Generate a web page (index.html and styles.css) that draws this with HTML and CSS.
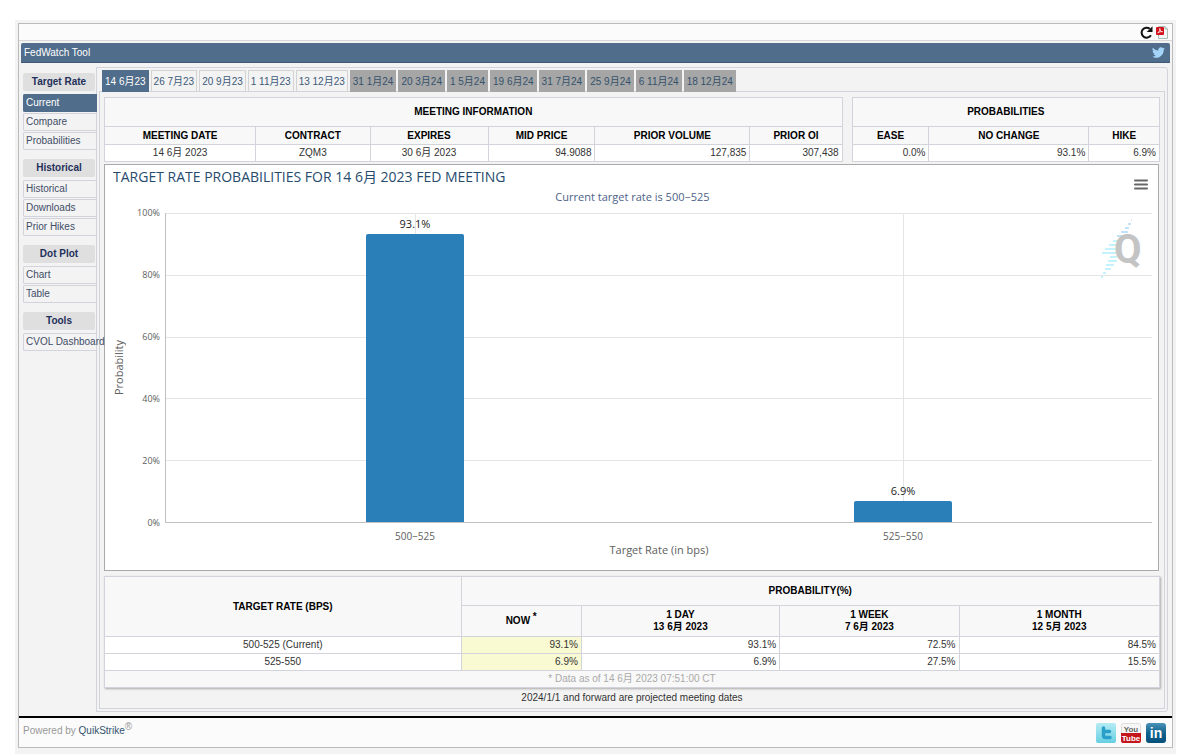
FILE: index.html
```html
<!DOCTYPE html>
<html lang="en">
<head>
  <meta charset="UTF-8" />
  <meta name="viewport" content="width=device-width, initial-scale=1.0" />
  <title>FedWatch Tool</title>
  <link rel="stylesheet" href="styles.css">
</head>
<body>
  <div class="frame">
    <div class="toolbar">
      <button type="button" aria-label="Refresh">
        <svg width="13" height="13" viewBox="0 0 13 13"><path d="M10.9 9.300A5 5 0 1 1 9.800 2.800" fill="none" stroke="#111" stroke-width="2"/><path d="M12.500 .2v5.800H6.700z" fill="#111"/></svg>
      </button>
      <button type="button" aria-label="Export to PDF">
        <svg width="12" height="13" viewBox="0 0 12 13"><path d="M2.5 .5h6.5l2.500 2.500v9.500h-9z" fill="#f4f7f5" stroke="#a9bdb5"/><path d="M9 .5v2.500h2.500" fill="none" stroke="#a9bdb5"/><rect x="0" y="1" width="8" height="8" rx="1" fill="#d4121b"/><path d="M1.800 7C3.500 5.500 4 3.500 3.800 2.500C4 4.500 5 5.800 6.500 5.700C4.500 5.400 3 6 1.800 7z" fill="none" stroke="#fff" stroke-width=".8"/></svg>
      </button>
    </div>

    <header class="titlebar">
      <h1>FedWatch Tool</h1>
      <a href="#" aria-label="Twitter">
        <svg width="13" height="13" viewBox="0 0 24 24"><path fill="#a5d4fa" d="M23.950 4.570a10 10 0 0 1-2.820.770 4.960 4.960 0 0 0 2.160-2.720c-.950.550-2 .950-3.130 1.180a4.920 4.920 0 0 0-8.380 4.480C7.690 8.090 4.070 6.130 1.640 3.160a4.930 4.930 0 0 0 1.520 6.570 4.900 4.900 0 0 1-2.230-.610v.060a4.920 4.920 0 0 0 3.950 4.830 5 5 0 0 1-2.210.080 4.940 4.940 0 0 0 4.600 3.420A9.870 9.870 0 0 1 0 19.540a13.990 13.990 0 0 0 7.550 2.210c9.050 0 14-7.500 14-13.980 0-.210 0-.420-.020-.630a9.940 9.940 0 0 0 2.460-2.550z"/></svg>
      </a>
    </header>

    <div class="main">
      <nav class="sidebar">
        <h2>Target Rate</h2>
        <a class="active" href="#">Current</a>
        <a href="#">Compare</a>
        <a href="#">Probabilities</a>
        <h2>Historical</h2>
        <a href="#">Historical</a>
        <a href="#">Downloads</a>
        <a href="#">Prior Hikes</a>
        <h2>Dot Plot</h2>
        <a href="#">Chart</a>
        <a href="#">Table</a>
        <h2>Tools</h2>
        <a href="#">CVOL Dashboard</a>
      </nav>

      <div class="panel">
        <div class="tabs">
          <a class="active" href="#">14 6月23</a>
          <a href="#">26 7月23</a>
          <a href="#">20 9月23</a>
          <a href="#">1 11月23</a>
          <a href="#">13 12月23</a>
          <a class="projected" href="#">31 1月24</a>
          <a class="projected" href="#">20 3月24</a>
          <a class="projected" href="#">1 5月24</a>
          <a class="projected" href="#">19 6月24</a>
          <a class="projected" href="#">31 7月24</a>
          <a class="projected" href="#">25 9月24</a>
          <a class="projected" href="#">6 11月24</a>
          <a class="projected" href="#">18 12月24</a>
        </div>

        <div class="content">
          <div class="summary">
            <table class="meeting">
              <colgroup><col class="c-date"><col class="c-contract"><col class="c-expires"><col class="c-price"><col class="c-volume"><col></colgroup>
              <thead>
                <tr class="caption"><th colspan="6">MEETING INFORMATION</th></tr>
                <tr><th>MEETING DATE</th><th>CONTRACT</th><th>EXPIRES</th><th>MID PRICE</th><th>PRIOR VOLUME</th><th>PRIOR OI</th></tr>
              </thead>
              <tbody>
                <tr><td class="center">14 6月 2023</td><td class="center">ZQM3</td><td class="center">30 6月 2023</td><td>94.9088</td><td>127,835</td><td>307,438</td></tr>
              </tbody>
            </table>
            <table class="probs">
              <colgroup><col class="c-ease"><col class="c-same"><col></colgroup>
              <thead>
                <tr class="caption"><th colspan="3">PROBABILITIES</th></tr>
                <tr><th>EASE</th><th>NO CHANGE</th><th>HIKE</th></tr>
              </thead>
              <tbody>
                <tr><td>0.0%</td><td>93.1%</td><td>6.9%</td></tr>
              </tbody>
            </table>
          </div>

          <section class="chart">
            <h2>TARGET RATE PROBABILITIES FOR 14 6月 2023 FED MEETING</h2>
            <p class="subtitle">Current target rate is 500−525</p>
            <button class="menu" type="button" aria-label="Chart menu">
              <svg width="14" height="11" viewBox="0 0 14 11"><path d="M1 1.500h12M1 5.500h12M1 9.500h12" stroke="#666" stroke-width="2" stroke-linecap="round"/></svg>
            </button>
            <div class="chart-body">
              <div class="y-title"><span>Probability</span></div>
              <div class="y-labels">
                <span>100%</span><span>80%</span><span>60%</span><span>40%</span><span>20%</span><span>0%</span>
              </div>
              <div class="plot">
                <div class="gridlines"><i></i><i></i><i></i><i></i><i></i></div>
                <div class="bars">
                  <div class="slot"><span>93.1%</span><div class="bar" style="height: 93.1%"></div></div>
                  <div class="slot"><span>6.9%</span><div class="bar" style="height: 6.9%"></div></div>
                </div>
              </div>
            </div>
            <div class="x-labels"><span>500−525</span><span>525−550</span></div>
            <p class="x-title">Target Rate (in bps)</p>
            <svg class="watermark" width="42" height="60" viewBox="0 0 42 60">
              <g stroke="#c5f3fd" stroke-width="2">
                <path d="M30 1h1" stroke="#dfe6f7"/>
                <path d="M27 5h3M24 9h4M20 13h7M16 17h8" stroke="#bfe3fb"/>
                <path d="M12 22h8M8 26h7M4 30h11M1 34h14M9 38h7M7 42h9M5 46h8M4 50h6M2 54h3M0 58h2"/>
              </g>
              <text x="13" y="44" fill="#c4c4c4">Q</text>
            </svg>
          </section>

          <table class="history">
            <colgroup><col class="c-rate"><col class="c-now"><col class="c-day"><col class="c-week"><col></colgroup>
            <thead>
              <tr class="caption"><th rowspan="2">TARGET RATE (BPS)</th><th colspan="4">PROBABILITY(%)</th></tr>
              <tr class="dates"><th>NOW <sup>*</sup></th><th>1 DAY<br>13 6月 2023</th><th>1 WEEK<br>7 6月 2023</th><th>1 MONTH<br>12 5月 2023</th></tr>
            </thead>
            <tbody>
              <tr><td class="center">500-525 (Current)</td><td class="now">93.1%</td><td>93.1%</td><td>72.5%</td><td>84.5%</td></tr>
              <tr><td class="center">525-550</td><td class="now">6.9%</td><td>6.9%</td><td>27.5%</td><td>15.5%</td></tr>
            </tbody>
            <tfoot>
              <tr><td colspan="5">* Data as of 14 6月 2023 07:51:00 CT</td></tr>
            </tfoot>
          </table>
          <p class="note">2024/1/1 and forward are projected meeting dates</p>
        </div>
      </div>
    </div>

    <footer>
      <p>Powered by <a href="#">QuikStrike</a><sup>®</sup></p>
      <div class="social">
        <a href="#" aria-label="Twitter">
          <svg width="20" height="20" viewBox="0 0 20 20">
            <defs><linearGradient id="tw" x2="0" y2="1"><stop offset="0" stop-color="#b5ecf4"/><stop offset="1" stop-color="#67cfe3"/></linearGradient></defs>
            <rect width="20" height="20" rx="2" fill="url(#tw)"/>
            <path d="M7.500 5v7.500q0 2 2 2h4.500M7.500 8.500h6" fill="none" stroke="#2a9fca" stroke-width="3.500" stroke-linecap="round"/>
          </svg>
        </a>
        <a href="#" aria-label="YouTube">
          <svg width="20" height="20" viewBox="0 0 20 20">
            <rect x=".5" y=".5" width="19" height="19" rx="2" fill="#f6f6f6" stroke="#ddd"/>
            <path d="M0 10h20v8q0 2-2 2h-16q-2 0-2-2z" fill="#c4161c"/>
            <text class="yt" x="10" y="9" fill="#666">You</text>
            <text class="yt" x="10" y="18" fill="#fff">Tube</text>
          </svg>
        </a>
        <a href="#" aria-label="LinkedIn">
          <svg width="20" height="20" viewBox="0 0 20 20">
            <defs><linearGradient id="li" x2="0" y2="1"><stop offset="0" stop-color="#4a92b8"/><stop offset=".5" stop-color="#10638f"/><stop offset="1" stop-color="#064f7b"/></linearGradient></defs>
            <rect width="20" height="20" rx="3" fill="url(#li)"/>
            <text class="in" x="10" y="15" fill="#fff">in</text>
          </svg>
        </a>
      </div>
    </footer>
  </div>
</body>
</html>
```
FILE: styles.css
```css
* {
  box-sizing: border-box;
}
html {
  background: #fff;
}
body {
  margin: 20px 24px 0 15px;
  min-height: calc(100vh - 20px);
  padding: 3px;
  background: #f3f3f3;
  font-family: "Liberation Sans", "Noto Sans CJK SC", sans-serif;
  font-size: 10px;
  line-height: 12px;
  color: #333;
}
h1, h2, p {
  margin: 0;
  font-size: 10px;
}
a {
  color: #3f4d66;
  text-decoration: none;
}
button {
  border: 0;
  padding: 0;
  background: none;
  cursor: pointer;
}
svg {
  display: block;
}
.frame {
  border: 1px solid #bbb;
}
.toolbar {
  display: flex;
  justify-content: flex-end;
  align-items: center;
  gap: 3px;
  height: 17px;
  padding-right: 4px;
  background: #fbfbfb;
  border-bottom: 1px solid #d8d8d8;
}
.titlebar {
  display: flex;
  justify-content: space-between;
  align-items: center;
  height: 20px;
  margin: 2px 2px 0;
  padding: 0 5px 0 3px;
  background: #506d8b;
  border-bottom: 1px solid #3f5a78;
  border-radius: 2px 2px 0 0;
}
.titlebar h1 {
  font-weight: normal;
  color: #fff;
}
.main {
  display: flex;
  margin: 4px 4px 4px;
}

/* left menu */
.sidebar {
  position: relative;
  z-index: 1;
  flex: none;
  width: 74px;
  padding-top: 6px;
}
.sidebar h2 {
  height: 18px;
  margin: 0 2px 3px 0;
  line-height: 18px;
  text-align: center;
  color: #23305a;
  background: #dfdfdf;
  border-radius: 2px;
}
.sidebar a + h2 {
  margin-top: 9px;
}
.sidebar a {
  display: block;
  height: 18px;
  margin-bottom: 1px;
  padding-left: 2px;
  line-height: 16px;
  white-space: nowrap;
  border: 1px solid #d3d3dc;
  border-right: 0;
  border-radius: 2px 0 0 2px;
}
.sidebar a.active {
  color: #fff;
  background: #506d8b;
  border-color: #506d8b;
}

.panel {
  flex: 1;
  min-width: 0;
  margin-left: -1px;
  padding: 2px;
  border: 1px solid #d3d3dc;
  border-radius: 0 3px 3px 0;
}
.tabs {
  display: flex;
  gap: 2px;
  padding-left: 3px;
}
.tabs a {
  height: 22px;
  padding: 0 2px;
  line-height: 22px;
  white-space: nowrap;
  color: #3c5a78;
  border: 1px solid #d3d3d3;
  border-bottom: 0;
}
.tabs a.active {
  color: #fff;
  background: #506d8b;
  border-color: #506d8b;
}
.tabs a.projected {
  color: #34526b;
  background: #a6a6a6;
  border-color: #a6a6a6;
}
.content {
  margin-top: -1px;
  padding: 5px 4px 4px;
  border: 1px solid #d3d3dc;
}

/* tables */
table {
  width: 100%;
  table-layout: fixed;
  border-collapse: collapse;
  background: #fff;
}
th, td {
  height: 17px;
  padding: 0 3px;
  border: 1px solid #d3d3dc;
}
th {
  height: 18px;
  color: #000;
  background: #f8f8f8;
}
td {
  text-align: right;
}
td.center {
  text-align: center;
}
.caption th {
  height: 29px;
}
.summary {
  display: flex;
  gap: 9px;
  margin-bottom: 2px;
}
.meeting {
  flex: 739;
}
.probs {
  flex: 308;
}
.c-date { width: 20.500%; }
.c-contract { width: 15.500%; }
.c-expires { width: 16%; }
.c-price { width: 14.500%; }
.c-volume { width: 21%; }
.c-ease { width: 25%; }
.c-same { width: 52%; }
.c-rate { width: 33.800%; }
.c-now { width: 11.400%; }
.c-day { width: 18.800%; }
.c-week { width: 17%; }

/* chart */
.chart {
  position: relative;
  margin-right: 1px;
  padding: 4px 6px 14px 8px;
  font-family: "Open Sans", "Noto Sans CJK SC", sans-serif;
  color: #606060;
  background: #fff;
  border: 1px solid #aaa;
}
.chart h2 {
  font-size: 14px;
  line-height: 16px;
  font-weight: normal;
  color: #274b6d;
}
.subtitle {
  margin-top: 6px;
  font-size: 11px;
  text-align: center;
  color: #4d5f87;
}
.menu {
  position: absolute;
  top: 14px;
  right: 10px;
}
.chart-body {
  display: flex;
  margin-top: 4px;
}
.y-title {
  display: flex;
  align-items: center;
  width: 16px;
  font-size: 11px;
}
.y-title span {
  writing-mode: vertical-rl;
  transform: rotate(180deg);
}
.y-labels {
  display: flex;
  flex-direction: column;
  justify-content: space-between;
  width: 36px;
  padding-right: 5px;
  font-size: 9px;
  text-align: right;
}
.plot {
  position: relative;
  flex: 1;
  height: 310px;
  margin: 6px 0;
  border-left: 1px solid #c0c0c0;
  border-bottom: 1px solid #c0c0c0;
}
.gridlines {
  display: flex;
  flex-direction: column;
  height: 100%;
}
.gridlines i {
  flex: 1;
  border-top: 1px solid #e4e4e4;
}
.bars {
  position: absolute;
  inset: 0;
  display: flex;
  padding: 0 5px;
}
.slot {
  flex: 1;
  display: flex;
  flex-direction: column;
  justify-content: flex-end;
  align-items: center;
  background: linear-gradient(#e4e4e4, #e4e4e4) center / 1px 100% no-repeat;
}
.slot span {
  margin-bottom: 4px;
  font-size: 11px;
  color: #222;
}
.bar {
  flex: none;
  width: 20%;
  background: #2a7fb9;
  border-radius: 2px 2px 0 0;
}
.x-labels {
  display: flex;
  padding: 1px 5px 0 58px;
  text-align: center;
}
.x-labels span {
  flex: 1;
}
.x-title {
  margin-top: 2px;
  padding-left: 53px;
  font-size: 11px;
  text-align: center;
}
.watermark {
  position: absolute;
  top: 54px;
  right: 15px;
}
.watermark text {
  font: bold 40px Roboto, sans-serif;
}

/* probability history */
.history {
  margin-top: 5px;
  box-shadow: 1px 1px 2px #aaa;
}
.history .dates th {
  height: 31px;
}
.history sup {
  font-size: 10px;
  line-height: 0;
}
.history .now {
  background: #f9f9d2;
}
.history tfoot td {
  color: #aaa;
  text-align: center;
  background: #f8f8f8;
}
.note {
  margin-top: 4px;
  text-align: center;
}

footer {
  display: flex;
  justify-content: space-between;
  align-items: flex-start;
  height: 31px;
  padding: 5px 6px 0 4px;
  background: #fbfbfb;
  border-top: 2px solid #000;
}
footer p {
  padding-top: 2px;
  color: #999;
}
footer p a {
  color: #34526b;
}
footer sup {
  font-size: 10px;
  line-height: 0;
}
.social {
  display: flex;
  gap: 5px;
}
.yt {
  font: bold 8px "Liberation Sans", sans-serif;
  text-anchor: middle;
}
.in {
  font: bold 14px "Liberation Sans", sans-serif;
  text-anchor: middle;
}
```
